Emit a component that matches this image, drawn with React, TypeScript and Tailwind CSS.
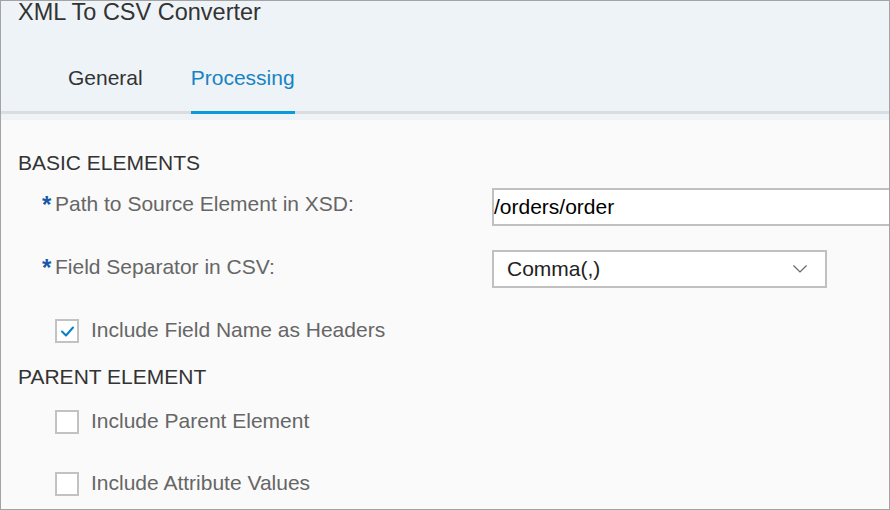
import { useState } from "react";

type CheckRowProps = {
  label: string;
  checked: boolean;
  onToggle: () => void;
  className?: string;
};

function CheckRow({ label, checked, onToggle, className }: CheckRowProps) {
  return (
    <label className={`flex cursor-pointer items-center pl-[54px] ${className ?? ""}`}>
      <span
        onClick={onToggle}
        className="flex h-[24px] w-[24px] shrink-0 items-center justify-center border-2 border-[#c2c2c2] bg-white"
      >
        {checked && (
          <svg width="20" height="20" viewBox="0 0 20 20" fill="none">
            <path d="M5 10.5 L9 14.5 L16 6.5" stroke="#0a7fc4" strokeWidth="2" strokeLinecap="round" strokeLinejoin="round" />
          </svg>
        )}
      </span>
      <span className="ml-[12px] text-[21px] leading-[24px] text-[#666666] -mt-[2px]">{label}</span>
    </label>
  );
}

function Required() {
  return (
    <span className="relative top-[2px] inline-block w-[13px] text-[24px] font-bold leading-[0] text-[#1659a6]">*</span>
  );
}

export default function App() {
  const [tab, setTab] = useState("Processing");
  const [path, setPath] = useState("/orders/order");
  const [headers, setHeaders] = useState(true);
  const [parent, setParent] = useState(false);
  const [attrs, setAttrs] = useState(false);

  return (
    <div
      className="flex h-[510px] w-[890px] flex-col overflow-hidden border border-[#a3a3a3] bg-[#fafafa]"
      style={{ fontFamily: '"Liberation Sans", Arial, sans-serif' }}
    >
      <header className="flex flex-col bg-[#eef3f8]">
        <div className="h-[65px] pl-[17px]">
          <h1 className="text-[23.5px] leading-[22px] text-[#333333]">XML To CSV Converter</h1>
        </div>
        <nav className="flex gap-[48px] border-b-[3px] border-[#dadcde] pl-[67px]">
          {["General", "Processing"].map((name) => (
            <button
              key={name}
              onClick={() => setTab(name)}
              className={`-mb-[3px] border-b-[3px] pb-[21px] text-[21px] leading-[24px] ${
                tab === name ? "border-[#0a9ad8] text-[#1784c0]" : "border-transparent text-[#333333]"
              }`}
            >
              {name}
            </button>
          ))}
        </nav>
        <div className="h-[6px]" />
      </header>

      <main className="flex flex-col pt-[31px]">
        <h2 className="pl-[17px] text-[21px] leading-[24px] text-[#333333]">BASIC ELEMENTS</h2>

        <div className="mt-[13px] flex h-[38px] items-start">
          <div className="w-[491px] shrink-0 pl-[41px] pt-[4px] text-[21px] leading-[24px] text-[#666666]">
            <Required />Path to Source Element in XSD:
          </div>
          <input
            value={path}
            onChange={(e) => setPath(e.target.value)}
            className="h-[38px] w-[420px] shrink-0 border-2 border-[#c0c0c0] bg-white px-0 text-[21px] text-black outline-none"
          />
        </div>

        <div className="mt-[24px] flex h-[38px] items-start">
          <div className="w-[491px] shrink-0 pl-[41px] pt-[5px] text-[21px] leading-[24px] text-[#666666]">
            <Required />Field Separator in CSV:
          </div>
          <div className="flex h-[38px] w-[335px] shrink-0 items-center justify-between border-2 border-[#c0c0c0] bg-white pl-[13px] pr-[18px]">
            <span className="text-[21px] leading-[24px] text-[#222222]">Comma(,)</span>
            <svg width="14" height="8" viewBox="0 0 14 8" fill="none">
              <path d="M0.5 0.5 L7 7 L13.5 0.5" stroke="#666666" strokeWidth="1.2" />
            </svg>
          </div>
        </div>

        <CheckRow
          label="Include Field Name as Headers"
          checked={headers}
          onToggle={() => setHeaders(!headers)}
          className="mt-[31px]"
        />

        <h2 className="mt-[22px] pl-[17px] text-[21px] leading-[24px] text-[#333333]">PARENT ELEMENT</h2>

        <CheckRow
          label="Include Parent Element"
          checked={parent}
          onToggle={() => setParent(!parent)}
          className="mt-[21px]"
        />
        <CheckRow
          label="Include Attribute Values"
          checked={attrs}
          onToggle={() => setAttrs(!attrs)}
          className="mt-[38px]"
        />
      </main>
    </div>
  );
}
